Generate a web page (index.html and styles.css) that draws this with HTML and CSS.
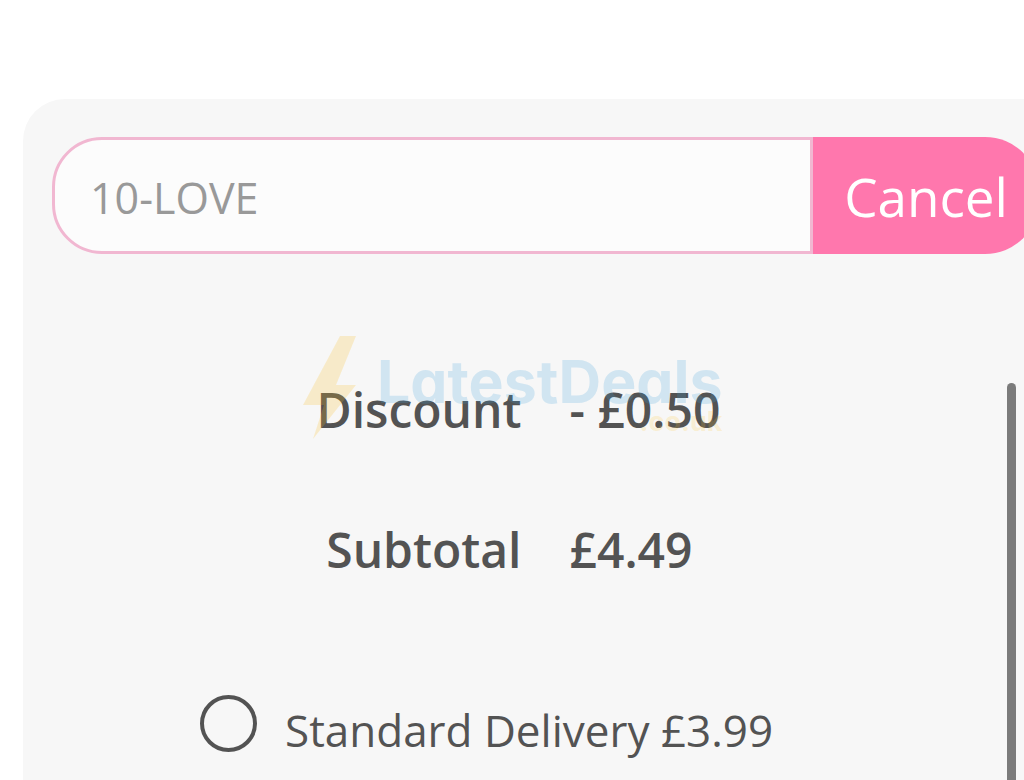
FILE: index.html
```html
<!DOCTYPE html>
<html lang="en">

<head>
    <meta charset="UTF-8">
    <meta name="viewport" content="width=device-width, initial-scale=1.0">
    <title>Basket</title>
    <link rel="stylesheet" href="styles.css">
</head>

<body>
    <main class="basket">
        <form class="promo">
            <input class="promo-code" type="text" placeholder="10-LOVE" aria-label="Promo code">
            <button class="promo-cancel" type="button">Cancel</button>
        </form>

        <table class="totals">
            <tr>
                <th scope="row">Discount</th>
                <td>- £0.50</td>
            </tr>
            <tr>
                <th scope="row">Subtotal</th>
                <td>£4.49</td>
            </tr>
        </table>

        <div class="delivery">
            <input type="radio" name="delivery" id="standard">
            <label for="standard">Standard Delivery £3.99</label>
        </div>
    </main>

    <div class="watermark">
        <svg class="bolt" viewBox="0 0 54 103" aria-hidden="true">
            <path d="M37 0H53L33 49H53L10 103L21 69H0Z" />
        </svg>
        <div class="brand">
            <span class="name">LatestDeals</span>
            <span class="domain">.co.uk</span>
        </div>
    </div>

    <div class="scroll-thumb"></div>
</body>

</html>
```

FILE: styles.css
```css
* {
    box-sizing: border-box;
    margin: 0;
    padding: 0;
}

body {
    min-height: 100vh;
    padding-top: 99px;
    background-color: #fff;
    color: #535353;
    font-family: "Open Sans", "Noto Sans", sans-serif;
    font-size: 44px;
    overflow: hidden;
}

/* wider than the screen, cut off on the right */
.basket {
    margin-left: 23px;
    margin-right: -44px;
    padding: 38px 29px;
    border-radius: 42px 42px 0 0;
    background-color: #f7f7f7;
}

.promo {
    display: flex;
    height: 117px;
}

.promo-code {
    flex: 1;
    min-width: 0;
    padding: 4px 35px 0;
    border: 3px solid #f1b7d1;
    border-radius: 50px 0 0 50px;
    background-color: #fcfcfc;
    color: #999;
    font: inherit;
    font-size: 43px;
}

.promo-code::placeholder {
    color: #999;
    opacity: 1;
}

.promo-cancel {
    padding: 2px 31px 0;
    border: 0;
    border-radius: 0 54px 54px 0;
    background-color: #ff77ad;
    color: #fff;
    font: inherit;
    font-size: 53px;
}

.totals {
    width: 100%;
    margin-top: 85px;
    border-collapse: collapse;
    table-layout: fixed;
    font-size: 48px;
}

.totals th,
.totals td {
    height: 140px;
    padding: 0 24px;
    font-weight: 600;
}

.totals th {
    text-align: right;
}

.totals td {
    text-align: left;
}

.delivery {
    display: flex;
    gap: 28px;
    margin-top: 76px;
    padding-left: 148px;
}

.delivery input {
    appearance: none;
    flex: none;
    width: 57px;
    height: 57px;
    border: 4px solid #535353;
    border-radius: 50%;
}

.delivery input:checked {
    background-color: #ff77ad;
}

.delivery label {
    padding-top: 5px;
    line-height: 60px;
}

.watermark {
    position: absolute;
    top: 336px;
    left: 303px;
    display: flex;
    gap: 20px;
    color: rgba(58, 160, 220, .2);
    font-family: Inter, sans-serif;
    font-weight: 700;
    pointer-events: none;
}

.bolt {
    width: 54px;
    height: 103px;
    fill: rgba(250, 190, 40, .22);
}

.brand {
    display: flex;
    flex-direction: column;
    padding-top: 16px;
}

/* single-storey a */
.name {
    font-feature-settings: "cv11";
    font-size: 59px;
    line-height: 60px;
}

.domain {
    align-self: flex-end;
    color: rgba(255, 200, 60, .2);
    font-size: 27px;
    line-height: 20px;
}

.scroll-thumb {
    position: fixed;
    top: 383px;
    right: 8px;
    bottom: -10px;
    width: 9px;
    border-radius: 5px;
    background-color: #7b7b7b;
}
```
